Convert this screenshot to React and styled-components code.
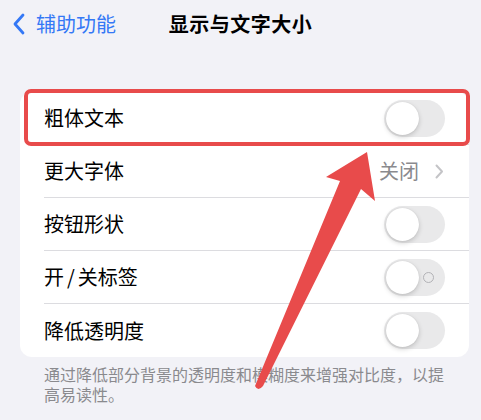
import styled, { createGlobalStyle } from "styled-components"

const GlobalStyle = createGlobalStyle`
    * { box-sizing: border-box; }
    body {
        margin: 0;
        background: #f2f2f7;
        font-family: "Noto Sans CJK SC", "Noto Sans", sans-serif;
    }
`

export default function App(){
    return(
        <Page>
            <GlobalStyle />
            <NavBar>
                <Back>
                    <svg width="14" height="22" viewBox="0 0 14 22">
                        <path d="M11 2 L3 11 L11 20" fill="none" stroke="#3478f6" strokeWidth="2.8" strokeLinecap="round" strokeLinejoin="round" />
                    </svg>
                    <span>辅助功能</span>
                </Back>
                <Title>显示与文字大小</Title>
                <div />
            </NavBar>
            <Card>
                <Row>
                    <Highlight />
                    <RowInner>
                        <Label>粗体文本</Label>
                        <Toggle />
                    </RowInner>
                </Row>
                <Row>
                    <RowInner>
                        <Label>更大字体</Label>
                        <Detail>
                            关闭
                            <svg width="9" height="15" viewBox="0 0 9 15">
                                <path d="M1.5 1.5 L7 7.5 L1.5 13.5" fill="none" stroke="#c4c4c7" strokeWidth="2" strokeLinecap="round" strokeLinejoin="round" />
                            </svg>
                        </Detail>
                    </RowInner>
                </Row>
                <Row>
                    <RowInner>
                        <Label>按钮形状</Label>
                        <Toggle />
                    </RowInner>
                </Row>
                <Row>
                    <RowInner>
                        <Label>开<Slash>/</Slash>关标签</Label>
                        <Toggle $labels />
                    </RowInner>
                </Row>
                <Row>
                    <RowInner $last>
                        <Label>降低透明度</Label>
                        <Toggle />
                    </RowInner>
                </Row>
            </Card>
            <Note>通过降低部分背景的透明度和模糊度来增强对比度，以提高易读性。</Note>
            <Arrow width="481" height="420" viewBox="0 0 481 420">
                <path d="M367 152 L375 201 L361 189 L263 386 Q258 392 255 386 L340 181 L326 177 Z" fill="#e84b4b" />
            </Arrow>
        </Page>
    )
}

function Toggle({ $labels }){
    return(
        <Track>
            <Knob />
            {$labels && <OffMark />}
        </Track>
    )
}

const Page = styled.div`
    position: relative;
    width: 481px;
    height: 420px;
    overflow: hidden;
    background: #f2f2f7;
`
const NavBar = styled.header`
    display: grid;
    grid-template-columns: 1fr auto 1fr;
    align-items: center;
    height: 48px;
    padding: 0 12px;
`
const Back = styled.div`
    display: flex;
    align-items: center;
    gap: 10px;
    color: #3478f6;
    font-size: 20px;
    span{
        line-height: 1;
    }
`
const Title = styled.h1`
    margin: 0;
    font-size: 20px;
    font-weight: 600;
    color: #000;
    line-height: 1;
    letter-spacing: 0.5px;
`
const Card = styled.section`
    margin: 44px 12px 0 20px;
    background: #fff;
    border-radius: 12px;
`
const Row = styled.div`
    position: relative;
    height: 53px;
    padding-left: 24px;
`
const RowInner = styled.div`
    display: flex;
    align-items: center;
    justify-content: space-between;
    height: 100%;
    padding-right: 24px;
    border-bottom: ${p => p.$last ? "none" : "1px solid #dcdce0"};
`
const Label = styled.span`
    font-size: 20px;
    color: #000;
    line-height: 1;
`
const Slash = styled.span`
    margin: 0 3px;
`
const Detail = styled.span`
    display: flex;
    align-items: center;
    gap: 16px;
    font-size: 20px;
    color: #8a8a8e;
    line-height: 1;
    padding-right: 1px;
`
const Highlight = styled.div`
    position: absolute;
    left: 4px;
    top: -3px;
    width: 446px;
    height: 57px;
    border: 4px solid #e84b4b;
    border-radius: 7px;
    pointer-events: none;
`
const Track = styled.div`
    position: relative;
    width: 61px;
    height: 37px;
    border-radius: 19px;
    background: #e9e9ea;
`
const Knob = styled.div`
    position: absolute;
    left: 2px;
    top: 2px;
    width: 33px;
    height: 33px;
    border-radius: 50%;
    background: #fff;
    box-shadow: 0 2px 5px rgba(0, 0, 0, 0.18), 0 0 1px rgba(0, 0, 0, 0.12);
`
const OffMark = styled.div`
    position: absolute;
    right: 11px;
    top: 13px;
    width: 11px;
    height: 11px;
    border-radius: 50%;
    border: 1.5px solid #b2b2b6;
`
const Note = styled.p`
    margin: 7px 0 0;
    padding: 0 27px 0 44px;
    font-size: 16px;
    line-height: 20px;
    color: #8a8a8e;
`
const Arrow = styled.svg`
    position: absolute;
    left: 0;
    top: 0;
    pointer-events: none;
`
